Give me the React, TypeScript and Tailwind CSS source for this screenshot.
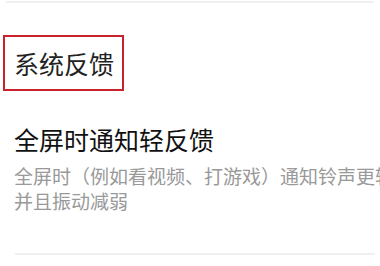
import React from "react";

const font = { fontFamily: '"Noto Sans CJK SC", "Noto Sans", sans-serif' };

export default function App() {
  return (
    <div className="w-[380px] h-[266px] overflow-hidden bg-white" style={font}>
      <div className="h-[2px] mt-[1px] mx-[6px] bg-[#f0f0f0]" />

      {/* section header */}
      <div className="mt-[32px] ml-[3px] w-[121px] h-[56px] border-2 border-[#c8232c] flex items-center pl-[9px]">
        <span className="text-[25px] leading-none text-[#222]">系统反馈</span>
      </div>

      {/* setting item */}
      <div className="pl-[14px] pt-[33px]">
        <div className="text-[25px] leading-[30px] text-[#111] whitespace-nowrap">全屏时通知轻反馈</div>
        <div className="mt-[9px] text-[19px] leading-[25px] text-[#999] whitespace-nowrap">
          <div>全屏时（例如看视频、打游戏）通知铃声更轻</div>
          <div>并且振动减弱</div>
        </div>
      </div>

      <div className="mt-[40px] ml-[15px] mr-[5px] h-[2px] bg-[#f0f0f0]" />
    </div>
  );
}
